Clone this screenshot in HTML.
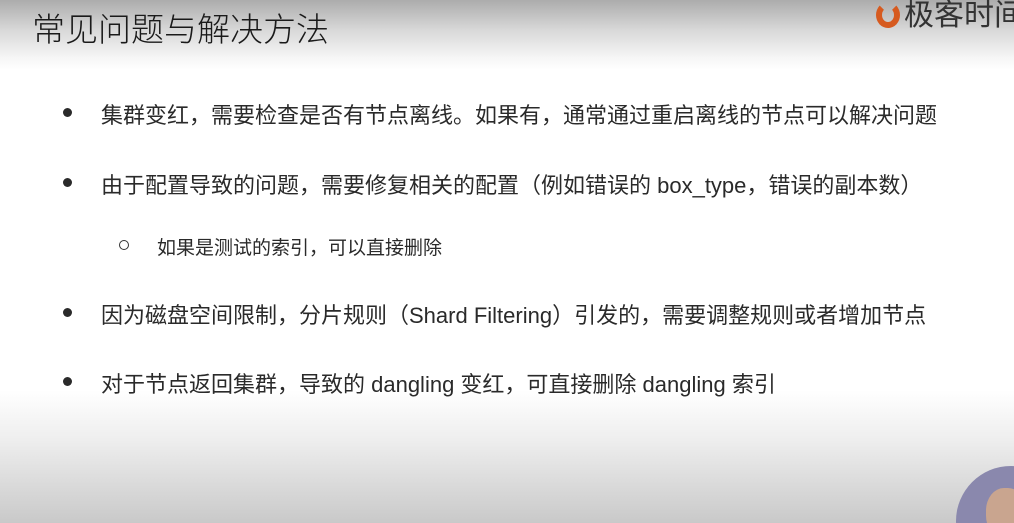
<!DOCTYPE html>
<html><head><meta charset="utf-8"><style>
html,body{margin:0;padding:0;width:1014px;height:523px;overflow:hidden}
body{position:relative;font-family:"Liberation Sans","Noto Sans CJK SC",sans-serif;color:#222;
background:linear-gradient(to bottom,#acacac 0px,#d8d8d8 30px,#f6f6f6 58px,#fff 70px,#fff 390px,#eeeeee 440px,#c9c9c9 523px);}
.t{position:absolute;left:32px;top:3px;font-size:33px;color:#1a1a1a;font-weight:300}
.logo{position:absolute;left:876px;top:-10px;font-size:30px;color:#333;white-space:nowrap}
.logo i{display:inline-block;width:24px;height:26px;border-radius:50%;border:6px solid #d65a1f;box-sizing:border-box;vertical-align:-3px;margin-right:4px;border-top-color:transparent}
.l{position:absolute;font-size:22px;white-space:nowrap;color:#2a2a2a}
.d{position:absolute;width:9px;height:9px;border-radius:50%;background:#2a2a2a}
.c{position:absolute;width:8px;height:8px;border-radius:50%;border:1.5px solid #333}
.clip{position:absolute;left:940px;top:450px;width:74px;height:73px;overflow:hidden}
.av{position:absolute;left:16px;top:16px;width:110px;height:110px;border-radius:50%;background:#8a88ad;overflow:hidden}
.av .h{position:absolute;left:30px;top:22px;width:40px;height:50px;border-radius:45%;background:#c9a58f}
</style></head><body>
<div class="t">常见问题与解决方法</div>
<div class="logo"><i></i>极客时间</div>
<div class="d" style="left:63px;top:108px"></div>
<div class="l" style="left:101px;top:98px">集群变红，需要检查是否有节点离线。如果有，通常通过重启离线的节点可以解决问题</div>
<div class="d" style="left:63px;top:178px"></div>
<div class="l" style="left:101px;top:168px">由于配置导致的问题，需要修复相关的配置（例如错误的 box_type，错误的副本数）</div>
<div class="c" style="left:119px;top:240px"></div>
<div class="l" style="left:157px;top:233px;font-size:19px">如果是测试的索引，可以直接删除</div>
<div class="d" style="left:63px;top:308px"></div>
<div class="l" style="left:101px;top:298px">因为磁盘空间限制，分片规则（Shard Filtering）引发的，需要调整规则或者增加节点</div>
<div class="d" style="left:63px;top:377px"></div>
<div class="l" style="left:101px;top:367px">对于节点返回集群，导致的 dangling 变红，可直接删除 dangling 索引</div>
<div class="clip"><div class="av"><div class="h"></div></div></div>
</body></html>
